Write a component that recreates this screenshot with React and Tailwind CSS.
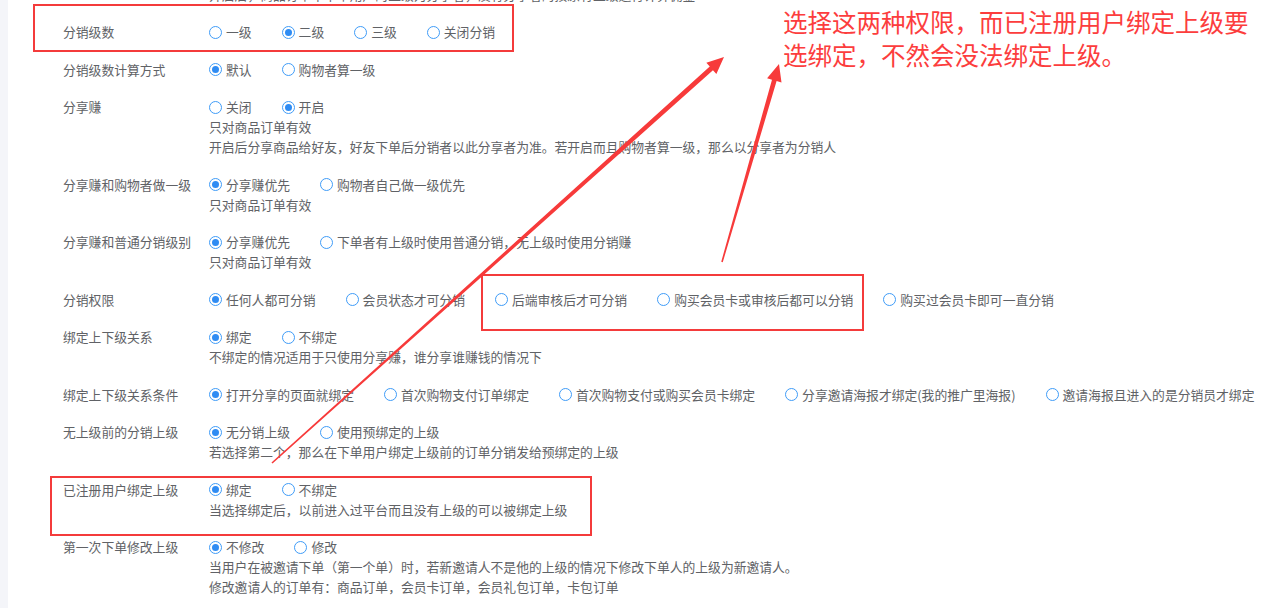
import React from 'react';

const rows = [
  { label: '分销级数', options: ['一级', '二级', '三级', '关闭分销'], checked: 1 },
  { label: '分销级数计算方式', options: ['默认', '购物者算一级'], checked: 0 },
  {
    label: '分享赚',
    options: ['关闭', '开启'],
    checked: 1,
    notes: [
      '只对商品订单有效',
      '开启后分享商品给好友，好友下单后分销者以此分享者为准。若开启而且购物者算一级，那么以分享者为分销人',
    ],
  },
  {
    label: '分享赚和购物者做一级',
    options: ['分享赚优先', '购物者自己做一级优先'],
    checked: 0,
    notes: ['只对商品订单有效'],
  },
  {
    label: '分享赚和普通分销级别',
    options: ['分享赚优先', '下单者有上级时使用普通分销，无上级时使用分销赚'],
    checked: 0,
    notes: ['只对商品订单有效'],
  },
  {
    label: '分销权限',
    options: ['任何人都可分销', '会员状态才可分销', '后端审核后才可分销', '购买会员卡或审核后都可以分销', '购买过会员卡即可一直分销'],
    checked: 0,
  },
  {
    label: '绑定上下级关系',
    options: ['绑定', '不绑定'],
    checked: 0,
    notes: ['不绑定的情况适用于只使用分享赚，谁分享谁赚钱的情况下'],
  },
  {
    label: '绑定上下级关系条件',
    options: ['打开分享的页面就绑定', '首次购物支付订单绑定', '首次购物支付或购买会员卡绑定', '分享邀请海报才绑定(我的推广里海报)', '邀请海报且进入的是分销员才绑定'],
    checked: 0,
  },
  {
    label: '无上级前的分销上级',
    options: ['无分销上级', '使用预绑定的上级'],
    checked: 0,
    notes: ['若选择第二个，那么在下单用户绑定上级前的订单分销发给预绑定的上级'],
  },
  {
    label: '已注册用户绑定上级',
    options: ['绑定', '不绑定'],
    checked: 0,
    notes: ['当选择绑定后，以前进入过平台而且没有上级的可以被绑定上级'],
  },
  {
    label: '第一次下单修改上级',
    options: ['不修改', '修改'],
    checked: 0,
    notes: [
      '当用户在被邀请下单（第一个单）时，若新邀请人不是他的上级的情况下修改下单人的上级为新邀请人。',
      '修改邀请人的订单有：商品订单，会员卡订单，会员礼包订单，卡包订单',
    ],
  },
];

function Radio({ on, text }) {
  return (
    <label className="flex items-center h-[20px] mr-[30px] whitespace-nowrap">
      <span className="w-[13px] h-[13px] rounded-full border border-[#3f9cf8] bg-white flex items-center justify-center shrink-0">
        {on && <span className="w-[7px] h-[7px] rounded-full bg-[#2f8cf3]" />}
      </span>
      <span className="ml-[4px]">{text}</span>
    </label>
  );
}

// tapered arrow, thin at the tail
function arrowPoints(x0, y0, x1, y1) {
  const dx = x1 - x0;
  const dy = y1 - y0;
  const len = Math.hypot(dx, dy);
  const ux = dx / len;
  const uy = dy / len;
  const nx = -uy;
  const ny = ux;
  const head = 17;
  const bx = x1 - ux * head;
  const by = y1 - uy * head;
  const p = (x, y, w) => `${x + nx * w},${y + ny * w}`;
  return [
    p(x0, y0, 0.8),
    p(bx, by, 2.4),
    p(bx, by, 7.5),
    `${x1},${y1}`,
    p(bx, by, -7.5),
    p(bx, by, -2.4),
    p(x0, y0, -0.8),
  ].join(' ');
}

export default function App() {
  return (
    <div
      className="relative flex min-h-screen bg-white text-[12.8px] text-[#606266] overflow-hidden"
      style={{ fontFamily: '"Noto Sans CJK SC", "Noto Sans", sans-serif' }}
    >
      <div className="w-[8px] shrink-0 bg-[#f4f5f9]" />

      <div className="flex-1 pl-[55px] flex flex-col gap-[17.5px]">
        {/* cut-off line above */}
        <div className="h-[4.5px] overflow-hidden flex items-end pl-[146px]">
          <div className="h-[20px] leading-[20px] shrink-0 whitespace-nowrap">
            开启后，商品订单中下单用户的上级为分享者，没有分享者的按原有上级进行计算佣金
          </div>
        </div>

        {rows.map((row) => (
          <div key={row.label} className="flex leading-[20px]">
            <div className="w-[146px] shrink-0">{row.label}</div>
            <div className="flex flex-col">
              <div className="flex">
                {row.options.map((o, i) => (
                  <Radio key={o} on={i === row.checked} text={o} />
                ))}
              </div>
              {row.notes?.map((n) => (
                <div key={n} className="whitespace-nowrap">
                  {n}
                </div>
              ))}
            </div>
          </div>
        ))}
      </div>

      {/* annotations */}
      <div className="absolute left-[33px] top-[4px] w-[481px] h-[48px] border-2 border-[#f43b3b]" />
      <div className="absolute left-[481px] top-[274px] w-[383px] h-[57px] border-2 border-[#f43b3b]" />
      <div className="absolute left-[50px] top-[476px] w-[542px] h-[60px] border-2 border-[#f43b3b]" />

      <div className="absolute left-[783px] top-[5px] text-[24.5px] leading-[33px] text-[#fc3d3d] whitespace-nowrap">
        <div>选择这两种权限，而已注册用户绑定上级要</div>
        <div>选绑定，不然会没法绑定上级。</div>
      </div>

      <svg className="absolute left-0 top-0 pointer-events-none" width="1263" height="608">
        <polygon points={arrowPoints(272, 463, 724, 57)} fill="#f73a3a" />
        <polygon points={arrowPoints(722, 262, 779, 64)} fill="#f73a3a" />
      </svg>
    </div>
  );
}
